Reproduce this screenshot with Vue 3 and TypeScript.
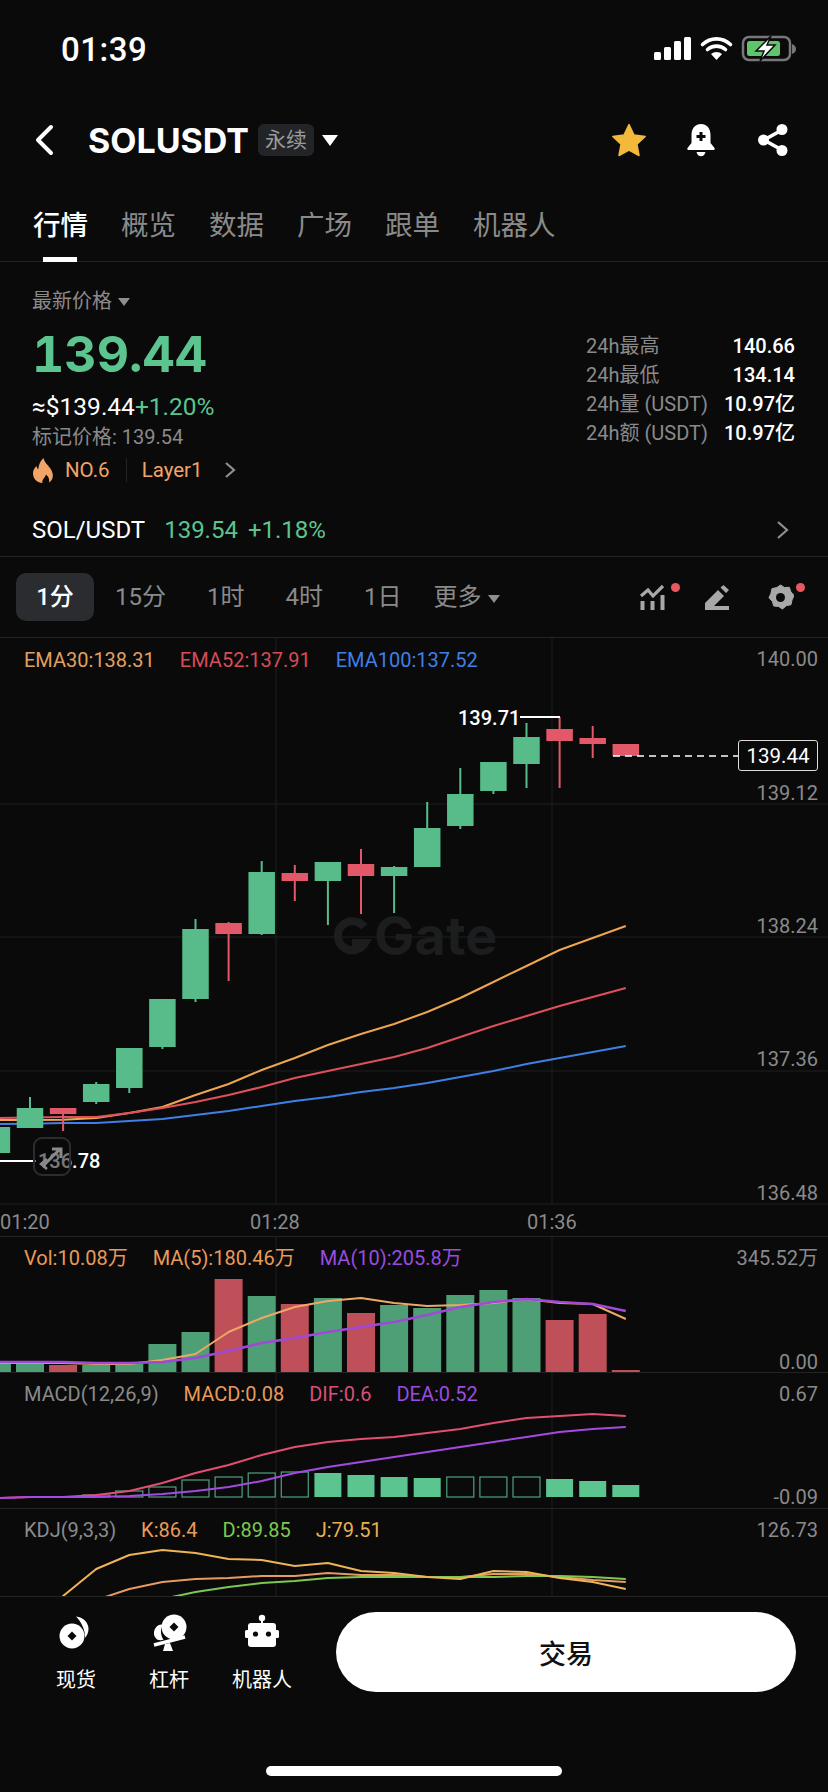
<template>
  <div class="page">
    <div class="status">
      <span class="time">01:39</span>
      <svg class="status-icons" width="145" height="30" viewBox="650 35 145 30">
        <rect x="653" y="53" width="7" height="8" rx="1.5" fill="#fff" />
        <rect x="663" y="48" width="7" height="13" rx="1.5" fill="#fff" />
        <rect x="673" y="42" width="7" height="19" rx="1.5" fill="#fff" />
        <rect x="683" y="38" width="7" height="23" rx="1.5" fill="#fff" />
        <path d="M701.5 45.5c8-7.5 20-7.5 28 0M706.5 50.5c5-4.500 13-4.500 18 0" fill="none" stroke="#fff" stroke-width="3.600" stroke-linecap="round" />
        <path d="M715.500 61l-5.500-6c3-2.800 8-2.800 11 0z" fill="#fff" />
        <rect x="742" y="38" width="47" height="23" rx="6" fill="none" stroke="#777" stroke-width="2.500" />
        <rect x="746" y="42" width="33" height="15" rx="2.500" fill="#5ec56a" />
        <path d="M791 45c3 1 4 3 4 5s-1 4-4 5z" fill="#777" />
        <path d="M770 37l-15 15h8l-4 10 15-16h-8l4-9z" fill="#fff" stroke="#0a0a0a" stroke-width="1.500" />
      </svg>
    </div>

    <div class="nav">
      <svg class="back" width="22" height="32" viewBox="0 0 22 32">
        <path d="M18 3L5 16l13 13" fill="none" stroke="#fff" stroke-width="4" stroke-linecap="round" stroke-linejoin="round" />
      </svg>
      <span class="symbol">SOLUSDT</span>
      <span class="tag">永续</span>
      <i class="caret caret--nav"></i>
      <div class="nav__icons">
        <svg width="36" height="34" viewBox="0 0 36 34">
          <path d="M18 1.500l4.900 10.400 11.300 1.500-8.300 7.800 2.100 11.300L18 27.100 8 32.500l2.100-11.300-8.300-7.800 11.300-1.500z" fill="#f2b93b" stroke="#f2b93b" stroke-width="1.500" stroke-linejoin="round" />
        </svg>
        <svg class="bell" width="30" height="34" viewBox="0 0 30 34">
          <path d="M15 1c-6.500 0-9.500 5-9.500 11v8L1.500 25c-.6 1 0 2 1 2h25c1 0 1.600-1 1-2l-4-5v-8C24.500 6 21.500 1 15 1z" fill="#fff" />
          <path d="M10.500 29h9c-.6 2.700-2.400 4.300-4.500 4.300S11.100 31.700 10.500 29z" fill="#fff" />
          <path d="M15 9v9M10.500 13.500h9" stroke="#0a0a0a" stroke-width="3" />
        </svg>
        <svg width="32" height="34" viewBox="0 0 32 34">
          <path d="M25 7L7 17l18 10" fill="none" stroke="#fff" stroke-width="3.500" />
          <circle cx="25" cy="6.500" r="5.500" fill="#fff" />
          <circle cx="6.500" cy="17" r="5.500" fill="#fff" />
          <circle cx="25" cy="27.500" r="5.500" fill="#fff" />
        </svg>
      </div>
    </div>

    <div class="tabs">
      <span v-for="(tab, index) in tabs" :key="tab" class="tab" :class="{ 'tab--active': index === 0 }">{{ tab }}</span>
    </div>

    <div class="ticker">
      <div class="ticker__left">
        <div class="latest">最新价格 <i class="caret caret--small"></i></div>
        <div class="price">139.44</div>
        <div class="fiat">≈$139.44<span class="green">+1.20%</span></div>
        <div class="mark">标记价格: 139.54</div>
        <div class="hot">
          <svg width="22" height="25" viewBox="0 0 22 25">
            <path d="M11.500 0c1 4.500 4 6.500 6.500 10 2.500 3.500 3.500 7 2.500 10-.6 2-2 3.500-3.500 4.500.8-3-.3-6-3-8-.6 2.500-2 3.200-3 5-.8 1.300-.8 2.200-.5 3.500C5.500 24.500 1.500 21.500 1 16c-.3-3.500 1.500-6 3.500-8 .2 1.500.7 2.500 1.800 3.200C6.500 6.500 8.500 3 11.500 0z" fill="#f0a468" />
          </svg>
          <span>NO.6</span>
          <b class="hot__sep"></b>
          <span>Layer1</span>
          <svg class="hot__more" width="14" height="20" viewBox="0 0 14 20">
            <path d="M3 3l8 7-8 7" fill="none" stroke="#8f8f8f" stroke-width="2.200" />
          </svg>
        </div>
      </div>
      <div class="stats">
        <div v-for="row in stats" :key="row.label" class="stats__row">
          <span>{{ row.label }}</span>
          <b>{{ row.value }}</b>
        </div>
      </div>
    </div>

    <div class="spot">
      <span class="spot__name">SOL/USDT</span>
      <span class="green spot__val">139.54</span>
      <span class="green spot__val">+1.18%</span>
      <svg class="spot__more" width="14" height="22" viewBox="0 0 14 22">
        <path d="M2 3l9 8-9 8" fill="none" stroke="#8f8f8f" stroke-width="2.200" />
      </svg>
    </div>

    <div class="intervals">
      <span v-for="(item, index) in intervals" :key="item" class="interval" :class="{ 'interval--active': index === 0 }">{{ item }}</span>
      <span class="interval interval--more">更多 <i class="caret caret--small"></i></span>
      <div class="tools">
        <span class="tool">
          <svg width="27" height="27" viewBox="0 0 27 27">
            <path d="M2 12l7-6 5 6 10-10" fill="none" stroke="#a8a8a8" stroke-width="3.200" />
            <path d="M3.500 17v9M13.500 17v9M23.500 11v15" stroke="#a8a8a8" stroke-width="4" />
          </svg>
          <i class="dot"></i>
        </span>
        <span class="tool">
          <svg width="27" height="27" viewBox="0 0 27 27">
            <path d="M15 6L2 19v7h24v-4H11l10-10zM17.500 3.500L20.500 1l5.500 5-3 3z" fill="#a8a8a8" />
          </svg>
        </span>
        <span class="tool">
          <svg width="27" height="27" viewBox="0 0 27 27">
            <path d="M13.500 1l4 2.500 4.800-.2 1.600 4.500 3.100 3.700-2 4.500v.000l-1 4.700-4.700 1-3.800 3.300-4-2.500-4.800-.5-1.300-4.500-3.400-3.700 2-4.500 1-4.700 4.700-1z" fill="#a8a8a8" stroke="#a8a8a8" stroke-linejoin="round" />
            <circle cx="13.500" cy="13.500" r="4.500" fill="#0a0a0a" />
          </svg>
          <i class="dot dot--near"></i>
        </span>
      </div>
    </div>

    <div class="chart">
      <div class="pane pane--main">
        <svg class="pane__svg" viewBox="0 638 828 598" width="828" height="598">
          <line v-for="y in [804, 937, 1071, 1204]" :key="y" x1="0" x2="828" :y1="y" :y2="y" class="grid" />
          <line v-for="x in gridX" :key="x" :x1="x" :x2="x" y1="638" y2="1204" class="grid" />
          <g fill="#1c1d1f">
            <path d="M364 927a14.500 14.500 0 1 0 1 16h-13" fill="none" stroke="#1c1d1f" stroke-width="8" />
            <text x="374" y="955" class="watermark">Gate</text>
          </g>
          <polyline :points="line(ema30)" class="curve" stroke="#eda552" stroke-width="2" />
          <polyline :points="line(ema52)" class="curve" stroke="#e0505c" stroke-width="2" />
          <polyline :points="line(ema100)" class="curve" stroke="#3f7fe6" stroke-width="2" />
          <g v-for="c in candles" :key="c.i">
            <line v-if="c.high !== c.top || c.low !== c.bottom" :x1="cx(c.i)" :x2="cx(c.i)" :y1="c.high" :y2="c.low" :stroke="c.up ? upColor : downColor" stroke-width="2" />
            <rect :x="cx(c.i) - 13.250" :y="c.top" width="26.500" :height="c.bottom - c.top" :fill="c.up ? upColor : downColor" />
          </g>
          <path d="M520 717h40M0 1161h36" stroke="#fff" stroke-width="2" fill="none" />
          <path d="M613 756h125" stroke="#fff" stroke-width="1.500" stroke-dasharray="7 5" fill="none" />
          <text x="458" y="725" class="mark-label">139.71</text>
          <text x="38" y="1168" class="mark-label">136.78</text>
          <text v-for="a in mainAxis" :key="a.text" x="818" :y="a.y" class="axis axis--end">{{ a.text }}</text>
          <text x="0" y="1229" class="axis">01:20</text>
          <text x="250" y="1229" class="axis">01:28</text>
          <text x="527" y="1229" class="axis">01:36</text>
        </svg>
        <div class="legend">
          <span class="c-orange">EMA30:138.31</span>
          <span class="c-red">EMA52:137.91</span>
          <span class="c-blue">EMA100:137.52</span>
        </div>
        <div class="last-price">139.44</div>
        <div class="jump">
          <svg width="36" height="36" viewBox="0 0 36 36">
            <path d="M9 26l15-15M17 10h9v9" fill="none" stroke="#8a8a8a" stroke-width="3" />
            <path d="M12 20l-6 5 6 5" fill="none" stroke="#8a8a8a" stroke-width="2.500" />
          </svg>
        </div>
      </div>

      <div class="pane pane--vol">
        <svg class="pane__svg" viewBox="0 1236 828 136" width="828" height="136">
          <line v-for="x in gridX" :key="x" :x1="x" :x2="x" y1="1236" y2="1372" class="grid" />
          <rect v-for="v in volBars" :key="v.i" :x="cx(v.i) - 14" :y="v.top" width="28" :height="1372 - v.top" :fill="v.up ? '#4f9f76' : '#bf4f59'" />
          <polyline :points="line(volMa5)" class="curve" stroke="#eda868" stroke-width="2" />
          <polyline :points="line(volMa10)" class="curve" stroke="#a048d8" stroke-width="2.500" />
          <text x="818" y="1265" class="axis axis--end">345.52万</text>
          <text x="818" y="1369" class="axis axis--end">0.00</text>
        </svg>
        <div class="legend legend--sub">
          <span class="c-peach">Vol:10.08万</span>
          <span class="c-peach">MA(5):180.46万</span>
          <span class="c-purple">MA(10):205.8万</span>
        </div>
      </div>

      <div class="pane pane--macd">
        <svg class="pane__svg" viewBox="0 1372 828 136" width="828" height="136">
          <line v-for="x in gridX" :key="x" :x1="x" :x2="x" y1="1372" y2="1508" class="grid" />
          <rect
            v-for="m in macdBars"
            :key="m.i"
            :x="cx(m.i) - 13.500"
            :y="m.top"
            width="27"
            :height="1497 - m.top"
            :fill="m.solid ? '#5cc48f' : 'none'"
            :stroke="m.solid ? 'none' : '#4f9f80'"
            stroke-width="1.200"
          />
          <polyline :points="line(dif)" class="curve" stroke="#e54e72" stroke-width="2" />
          <polyline :points="line(dea)" class="curve" stroke="#a34be0" stroke-width="2" />
          <text x="818" y="1401" class="axis axis--end">0.67</text>
          <text x="818" y="1504" class="axis axis--end">-0.09</text>
        </svg>
        <div class="legend legend--sub">
          <span class="c-gray">MACD(12,26,9)</span>
          <span class="c-peach">MACD:0.08</span>
          <span class="c-pink">DIF:0.6</span>
          <span class="c-purple">DEA:0.52</span>
        </div>
      </div>

      <div class="pane pane--kdj">
        <svg class="pane__svg" viewBox="0 1508 828 88" width="828" height="88">
          <line v-for="x in gridX" :key="x" :x1="x" :x2="x" y1="1508" y2="1596" class="grid" />
          <polyline :points="line(kLine, 2)" class="curve" stroke="#e89a63" stroke-width="2" />
          <polyline :points="line(dLine, 4)" class="curve" stroke="#7cc850" stroke-width="2" />
          <polyline :points="line(jLine, 0)" class="curve" stroke="#eeb455" stroke-width="2" />
          <text x="818" y="1537" class="axis axis--end">126.73</text>
        </svg>
        <div class="legend legend--sub">
          <span class="c-gray">KDJ(9,3,3)</span>
          <span class="c-peach">K:86.4</span>
          <span class="c-green">D:89.85</span>
          <span class="c-yellow">J:79.51</span>
        </div>
      </div>
    </div>

    <div class="bottom">
      <div class="actions">
        <div class="action">
          <svg width="40" height="38" viewBox="0 0 40 38">
            <path d="M20 2.500c7 .5 12.500 6 12.500 12.500 0 3.500-1.300 6.500-3.500 8.800.5-6.800-3.200-15.500-9-21.300z" fill="#fff" />
            <circle cx="16" cy="22" r="12.500" fill="#fff" />
            <path d="M16 17.500l4.500 4.500-4.500 4.500-4.500-4.500z" fill="#0a0a0a" />
          </svg>
          <span>现货</span>
        </div>
        <div class="action">
          <svg width="40" height="38" viewBox="0 0 40 38">
            <circle cx="25" cy="13" r="12.500" fill="#fff" />
            <path d="M25 8.500l4.500 4.500-4.500 4.500-4.500-4.500z" fill="#0a0a0a" />
            <path d="M14 10.500a8.500 8.500 0 0 0-6 15c2 1 4.500 1 6.500.3C11.500 21 11 15 14 10.500z" fill="#fff" />
            <path d="M5 31l31-8" stroke="#fff" stroke-width="3.500" />
            <path d="M16 30l5-1 3 8H14z" fill="#fff" />
          </svg>
          <span>杠杆</span>
        </div>
        <div class="action">
          <svg width="40" height="38" viewBox="0 0 40 38">
            <circle cx="20" cy="4" r="3.200" fill="#fff" />
            <path d="M19 5h2v5h-2z" fill="#fff" />
            <rect x="6" y="9" width="28" height="24" rx="3" fill="#fff" />
            <rect x="3" y="16" width="34" height="8" rx="1.500" fill="#fff" />
            <circle cx="13.500" cy="20" r="2.600" fill="#0a0a0a" />
            <circle cx="26.500" cy="20" r="2.600" fill="#0a0a0a" />
          </svg>
          <span>机器人</span>
        </div>
      </div>
      <button class="trade" type="button">交易</button>
      <i class="home"></i>
    </div>
  </div>
</template>

<script setup lang="ts">
interface Candle {
  i: number
  top: number
  bottom: number
  high: number
  low: number
  up: boolean
}

const upColor = '#57bc8a'
const downColor = '#e25868'

const tabs = ['行情', '概览', '数据', '广场', '跟单', '机器人']
const intervals = ['1分', '15分', '1时', '4时', '1日']
const gridX = [276, 552]

const stats = [
  { label: '24h最高', value: '140.66' },
  { label: '24h最低', value: '134.14' },
  { label: '24h量 (USDT)', value: '10.97亿' },
  { label: '24h额 (USDT)', value: '10.97亿' },
]

const mainAxis = [
  { text: '140.00', y: 666 },
  { text: '139.12', y: 800 },
  { text: '138.24', y: 933 },
  { text: '137.36', y: 1066 },
  { text: '136.48', y: 1200 },
]

// i, top, bottom, high, low, up
const candleRows: [number, number, number, number, number, boolean][] = [
  [-1, 1127, 1153, 1127, 1153, true],
  [0, 1108, 1128, 1097, 1128, true],
  [1, 1108, 1114, 1108, 1131, false],
  [2, 1084, 1102, 1082, 1104, true],
  [3, 1048, 1088, 1048, 1093, true],
  [4, 999, 1047, 999, 1049, true],
  [5, 929, 999, 919, 1002, true],
  [6, 923, 934, 922, 981, false],
  [7, 872, 934, 861, 935, true],
  [8, 873, 881, 865, 901, false],
  [9, 862, 881, 862, 925, true],
  [10, 864, 876, 849, 914, false],
  [11, 867, 876, 866, 913, true],
  [12, 828, 867, 802, 867, true],
  [13, 794, 826, 768, 829, true],
  [14, 762, 791, 762, 794, true],
  [15, 737, 764, 723, 788, true],
  [16, 729, 741, 717, 788, false],
  [17, 738, 744, 726, 758, false],
  [18, 744, 756, 744, 756, false],
]
const candles: Candle[] = candleRows.map(([i, top, bottom, high, low, up]) => ({ i, top, bottom, high, low, up }))

const ema30 = [1120, 1120, 1119.7, 1118, 1113, 1107, 1095, 1084, 1070, 1058, 1045, 1034, 1024, 1012, 998, 982, 966, 950, 938, 926]
const ema52 = [1118, 1117.5, 1117, 1117, 1113, 1108, 1102, 1095, 1087, 1078, 1071, 1064, 1057, 1048, 1037, 1026, 1016, 1006, 997, 988]
const ema100 = [1124, 1123.7, 1123, 1123, 1121, 1119, 1115, 1111, 1106, 1101, 1097, 1092, 1088, 1083, 1077, 1071, 1064, 1058, 1052, 1046]

const volTops = [1364, 1364, 1365, 1365, 1364, 1344, 1332, 1279, 1296, 1304, 1298, 1313, 1305, 1308, 1295, 1290, 1298, 1320, 1314, 1370]
const volDown = [1, 6, 8, 10, 16, 17, 18]
const volBars = volTops.map((top, n) => ({ i: n - 1, top, up: !volDown.includes(n - 1) }))
const volMa5 = [1363, 1363, 1363, 1364, 1364, 1360, 1354, 1332, 1318, 1307, 1301, 1298, 1303, 1306, 1305, 1303, 1299, 1303, 1304, 1319]
const volMa10 = [1362, 1362, 1362, 1363, 1363, 1362, 1358, 1351, 1343, 1338, 1332, 1327, 1322, 1315, 1307, 1302, 1299, 1302, 1304, 1311]

const macdTops = [1495, 1491, 1487, 1480, 1477, 1473, 1472, 1473, 1475, 1477, 1478, 1477, 1477, 1477, 1479, 1481, 1485]
const macdSolid = [9, 10, 11, 12, 16, 17, 18]
const macdBars = macdTops.map((top, n) => ({ i: n + 2, top, solid: macdSolid.includes(n + 2) }))
const dif = [1498, 1497, 1497, 1495, 1491, 1483, 1473, 1465, 1455, 1447, 1442, 1439, 1437, 1433, 1429, 1423, 1418, 1416, 1414, 1416]
const dea = [1498, 1497, 1497, 1497, 1496, 1494, 1491, 1487, 1481, 1473, 1467, 1462, 1457, 1452, 1447, 1442, 1437, 1432, 1429, 1427]

const jLine = [1640, 1596, 1569, 1555, 1550, 1553, 1559, 1560, 1566, 1563, 1571, 1573, 1577, 1579, 1571, 1572, 1578, 1582, 1589]
const kLine = [1600, 1589, 1582, 1579, 1578, 1576, 1576, 1573, 1575, 1575, 1577, 1577, 1574, 1574, 1577, 1580, 1582]
const dLine = [1599, 1592, 1587, 1583, 1581, 1578, 1577, 1577, 1577, 1577, 1577, 1576, 1576, 1577, 1579]

const cx = (i: number) => 30 + 33.1 * i

const line = (values: number[], start = -1) =>
  values.map((y, n) => `${cx(start + n)},${y}`).join(' ')
</script>

<style scoped>
.page {
  width: 828px;
  height: 1792px;
  overflow: hidden;
  background: #0a0a0a;
  color: #fff;
  font-family: Roboto, "Noto Sans CJK SC", sans-serif;
}
.green {
  color: #5cc48f;
}
.caret {
  display: inline-block;
  width: 0;
  height: 0;
  border-left: 6px solid transparent;
  border-right: 6px solid transparent;
  border-top: 8px solid #8f8f8f;
}
.caret--nav {
  margin-left: 8px;
  border-left-width: 8px;
  border-right-width: 8px;
  border-top: 11px solid #fff;
}
.caret--small {
  vertical-align: 2px;
  margin-left: 1px;
}

.status {
  height: 98px;
  display: flex;
  align-items: center;
  justify-content: space-between;
  padding: 0 32px 0 61px;
}
.time {
  font-size: 33px;
  font-weight: 500;
  letter-spacing: 0.5px;
}
.status-icons {
  display: block;
}

.nav {
  height: 84px;
  display: flex;
  align-items: center;
  padding: 0 39px 0 33px;
}
.back {
  margin-right: 33px;
}
.symbol {
  font-family: Inter, sans-serif;
  font-size: 34px;
  font-weight: 700;
}
.tag {
  margin-left: 9px;
  width: 56px;
  height: 32px;
  border-radius: 6px;
  background: #222428;
  color: #9a9a9a;
  font-size: 21px;
  line-height: 32px;
  text-align: center;
}
.nav__icons {
  margin-left: auto;
  display: flex;
  align-items: center;
  gap: 39px;
}
.nav__icons svg {
  display: block;
}
.nav__icons .bell {
  margin-right: 2px;
}

.tabs {
  height: 80px;
  box-sizing: border-box;
  display: flex;
  gap: 33px;
  padding: 26px 0 0 33px;
  border-bottom: 1px solid #232323;
}
.tab {
  position: relative;
  height: 54px;
  font-size: 27.500px;
  line-height: 36px;
  color: #8a8a8a;
}
.tab--active {
  color: #fff;
  font-weight: 500;
}
.tab--active::after {
  content: "";
  position: absolute;
  left: 10px;
  right: 11px;
  bottom: 0;
  height: 5px;
  background: #fff;
}

.ticker {
  height: 242px;
  box-sizing: border-box;
  display: flex;
  justify-content: space-between;
  padding: 27px 33px 0 32px;
}
.latest {
  height: 24px;
  font-size: 20px;
  line-height: 24px;
  color: #8a8a8a;
}
.price {
  margin-top: 13px;
  height: 56px;
  font-family: Inter, sans-serif;
  font-variant-numeric: tabular-nums;
  font-size: 50px;
  line-height: 56px;
  font-weight: 700;
  color: #5cc48f;
}
.fiat {
  margin-top: 10px;
  height: 30px;
  font-size: 24.500px;
  line-height: 30px;
}
.mark {
  margin-top: 3px;
  height: 24px;
  font-size: 20px;
  line-height: 24px;
  color: #8a8a8a;
}
.hot {
  margin-top: 7px;
  height: 28px;
  display: flex;
  align-items: center;
  font-size: 20.500px;
  color: #f0a468;
}
.hot span:first-of-type {
  margin-left: 11px;
}
.hot__sep {
  width: 1px;
  height: 24px;
  margin: 0 15px 0 16px;
  background: #222;
}
.hot__more {
  margin-left: 20px;
}
.stats {
  width: 209px;
  padding-top: 43px;
}
.stats__row {
  display: flex;
  justify-content: space-between;
  height: 29px;
  font-size: 20px;
  line-height: 29px;
  color: #8a8a8a;
  white-space: nowrap;
}
.stats__row b {
  font-weight: 500;
  color: #fff;
}

.spot {
  height: 53px;
  box-sizing: border-box;
  display: flex;
  align-items: center;
  padding: 0 38px 0 32px;
  border-bottom: 1px solid #232323;
  font-size: 24px;
}
.spot__val {
  margin-left: 10px;
}
.spot__name + .spot__val {
  margin-left: 19px;
}
.spot__more {
  margin-left: auto;
}

.intervals {
  height: 81px;
  box-sizing: border-box;
  display: flex;
  align-items: center;
  padding: 0 0 0 16px;
  border-bottom: 1px solid #232323;
  font-size: 24px;
  color: #8a8a8a;
}
.interval {
  height: 48px;
  line-height: 48px;
  margin-right: 41px;
}
.interval--active {
  width: 78px;
  margin-right: 21px;
  border-radius: 10px;
  background: #2a2c30;
  color: #fff;
  font-weight: 500;
  text-align: center;
}
.interval--more {
  margin-left: -9px;
  margin-right: 0;
}
.tools {
  margin-left: auto;
  display: flex;
  gap: 37px;
  padding-right: 34px;
}
.tool {
  position: relative;
  display: block;
  height: 27px;
}
.tool svg {
  display: block;
}
.dot {
  position: absolute;
  top: -1px;
  right: -14px;
  width: 9px;
  height: 9px;
  border-radius: 50%;
  background: #e8585f;
}
.dot--near {
  right: -11px;
}

.chart {
  height: 959px;
}
.pane {
  position: relative;
  box-sizing: border-box;
}
.pane--main {
  height: 598px;
}
.pane--vol,
.pane--macd {
  height: 136px;
}
.pane--vol,
.pane--macd,
.pane--kdj {
  border-top: 1px solid #232323;
}
.pane--kdj {
  height: 89px;
  border-bottom: 1px solid #232323;
  overflow: hidden;
}
.pane--main .pane__svg {
  top: 0;
}
.pane__svg {
  position: absolute;
  left: 0;
  top: -1px;
  overflow: visible;
}
.pane--kdj .pane__svg {
  overflow: hidden;
}
.grid {
  stroke: #1f1f1f;
  stroke-width: 1;
}
.curve {
  fill: none;
  stroke-linejoin: round;
}
.watermark {
  font-family: Inter, sans-serif;
  font-size: 54px;
  font-weight: 700;
}
.mark-label {
  font-size: 20px;
  font-weight: 500;
  fill: #fff;
}
.axis {
  font-size: 20px;
  fill: #8a8a8a;
}
.axis--end {
  text-anchor: end;
}
.legend {
  position: relative;
  display: flex;
  gap: 25px;
  padding: 10px 0 0 24px;
  font-size: 20px;
  line-height: 24px;
  white-space: nowrap;
}
.legend--sub {
  padding-top: 9px;
}
.c-orange {
  color: #e0a060;
}
.c-red {
  color: #d84b58;
}
.c-blue {
  color: #3f7fe6;
}
.c-peach {
  color: #e89a5a;
}
.c-purple {
  color: #9a4be0;
}
.c-gray {
  color: #8a8a8a;
}
.c-pink {
  color: #d8507a;
}
.c-green {
  color: #7cc850;
}
.c-yellow {
  color: #e8b050;
}
.last-price {
  position: absolute;
  left: 738px;
  top: 102px;
  width: 80px;
  height: 31px;
  box-sizing: border-box;
  border: 1px solid #ddd;
  border-radius: 3px;
  background: #0a0a0a;
  font-size: 20.500px;
  line-height: 30px;
  text-align: center;
}
.jump {
  position: absolute;
  left: 33px;
  top: 499px;
  width: 38px;
  height: 39px;
  box-sizing: border-box;
  border: 2px solid #2c2c2c;
  border-radius: 9px;
  background: rgba(10, 10, 10, 0.55);
}
.jump svg {
  display: block;
}

.bottom {
  position: relative;
  height: 195px;
  display: flex;
  align-items: flex-start;
  padding: 15px 32px 0 0;
}
.actions {
  width: 336px;
  display: flex;
  padding-left: 41px;
  box-sizing: border-box;
  gap: 23px;
}
.action {
  width: 70px;
  display: flex;
  flex-direction: column;
  align-items: center;
  font-size: 20px;
  white-space: nowrap;
}
.action svg {
  display: block;
  margin-top: 2px;
  margin-bottom: 12px;
}
.trade {
  width: 460px;
  height: 80px;
  border: 0;
  border-radius: 40px;
  background: #fff;
  color: #111;
  font-family: inherit;
  font-size: 27px;
  font-weight: 500;
}
.home {
  position: absolute;
  left: 266px;
  top: 169px;
  width: 296px;
  height: 10px;
  border-radius: 5px;
  background: #fff;
}
</style>

<style>
html,
body {
  background: #0a0a0a;
}
</style>
